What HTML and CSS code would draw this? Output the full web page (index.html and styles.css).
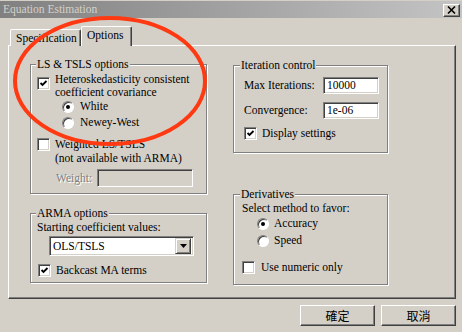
FILE: index.html
```html
<!DOCTYPE html>
<html lang="en">
<head>
  <meta charset="UTF-8" />
  <title>Equation Estimation</title>
  <link rel="stylesheet" href="styles.css">
</head>
<body>
  <div class="dialog">
    <div class="titlebar">
      <span class="title">Equation Estimation</span>
      <span class="close-btn">
        <svg width="9" height="8" viewBox="0 0 9 8"><path d="M1 0.5 L8 7.5 M8 0.5 L1 7.5" stroke="#000" stroke-width="1.6"/></svg>
      </span>
    </div>

    <div class="tabs">
      <div class="tab">Specification</div>
      <div class="tab active">Options</div>
    </div>

    <div class="panel">
      <div class="col col-left">
        <div class="group ls-group">
          <span class="legend">LS &amp; TSLS options</span>
          <div class="check-row hetero-row">
            <span class="checkbox checked"></span>
            <span class="label">Heteroskedasticity consistent<br>coefficient covariance</span>
          </div>
          <div class="radio-row white-row">
            <span class="radio on"></span>
            <span>White</span>
          </div>
          <div class="radio-row newey-row">
            <span class="radio"></span>
            <span>Newey-West</span>
          </div>
          <div class="check-row weighted-row">
            <span class="checkbox"></span>
            <span class="label">Weighted LS/TSLS<br>(not available with ARMA)</span>
          </div>
          <div class="weight-row">
            <span class="disabled weight-label">Weight:</span>
            <span class="weight-input"></span>
          </div>
        </div>

        <div class="group arma-group">
          <span class="legend">ARMA options</span>
          <div class="plain-row start-row">Starting coefficient values:</div>
          <div class="combo">
            <span class="combo-text">OLS/TSLS</span>
            <span class="combo-btn">
              <svg width="7" height="4" viewBox="0 0 7 4"><path d="M0 0 H7 L3.5 4 Z" fill="#000"/></svg>
            </span>
          </div>
          <div class="check-row backcast-row">
            <span class="checkbox checked"></span>
            <span class="label">Backcast MA terms</span>
          </div>
        </div>
      </div>

      <div class="col col-right">
        <div class="group iter-group">
          <span class="legend">Iteration control</span>
          <div class="field-row max-row">
            <span class="field-label">Max Iterations:</span>
            <span class="input field">10000</span>
          </div>
          <div class="field-row conv-row">
            <span class="field-label">Convergence:</span>
            <span class="input field">1e-06</span>
          </div>
          <div class="check-row display-row">
            <span class="checkbox checked"></span>
            <span class="label">Display settings</span>
          </div>
        </div>

        <div class="group deriv-group">
          <span class="legend">Derivatives</span>
          <div class="plain-row select-row">Select method to favor:</div>
          <div class="radio-row accuracy-row">
            <span class="radio on"></span>
            <span>Accuracy</span>
          </div>
          <div class="radio-row speed-row">
            <span class="radio"></span>
            <span>Speed</span>
          </div>
          <div class="check-row numeric-row">
            <span class="checkbox"></span>
            <span class="label">Use numeric only</span>
          </div>
        </div>
      </div>
    </div>

    <div class="buttons">
      <button class="btn">確定</button>
      <button class="btn">取消</button>
    </div>

    <!-- hand drawn highlight -->
    <svg class="highlight" width="462" height="332" viewBox="0 0 462 332">
      <ellipse cx="110" cy="81" rx="95" ry="63" fill="none" stroke="#ff3a12" stroke-width="4"/>
    </svg>
  </div>
</body>
</html>
```

FILE: styles.css
```css
* {
  box-sizing: border-box;
}
html, body {
  margin: 0;
  padding: 0;
}
body {
  background: #d4d0c8;
  font-family: "Liberation Serif", "Times New Roman", serif;
  font-size: 11.5px;
  line-height: 13px;
  color: #000;
}

.dialog {
  position: relative;
  width: 462px;
  height: 332px;
  overflow: hidden;
}

/* title bar */
.titlebar {
  margin-top: 1px;
  height: 17px;
  background: linear-gradient(to right, #808080, #c4c4c4);
  display: flex;
  align-items: center;
  justify-content: space-between;
  padding: 0 2px 0 3px;
}
.titlebar .title {
  color: #d4d0c8;
}
.close-btn {
  width: 17px;
  height: 13px;
  margin-top: 1px;
  background: #d4d0c8;
  border: 1px solid;
  border-color: #fff #404040 #404040 #fff;
  box-shadow: inset -1px -1px 0 #808080;
  display: flex;
  align-items: center;
  justify-content: center;
}

/* tabs */
.tabs {
  display: flex;
  align-items: flex-end;
  height: 20px;
  margin: 8px 0 -1px 10px;
}
.tab {
  height: 17px;
  width: 71px;
  padding: 1px 0 0 5px;
  line-height: 14px;
  border: 1px solid;
  border-bottom: none;
  border-color: #fff #404040 #404040 #fff;
  border-radius: 2px 2px 0 0;
  box-shadow: inset -1px 0 0 #808080;
  background: #d4d0c8;
}
.tab.active {
  position: relative;
  z-index: 1;
  height: 20px;
  width: 51px;
}

/* panel */
.panel {
  margin: 0 6px 0 8px;
  height: 254px;
  border: 1px solid;
  border-color: #fff #404040 #404040 #fff;
  box-shadow: inset -1px -1px 0 #808080;
  padding: 18px 0 0 21px;
  display: grid;
  grid-template-columns: 177px 155px;
  column-gap: 26px;
  align-content: start;
}
.col {
  display: flex;
  flex-direction: column;
  min-width: 0;
}
.col-left {
  gap: 19px;
}
.col-right {
  margin-top: 1px;
  gap: 41px;
}

/* etched group boxes */
.group {
  border: 1px solid #808080;
  box-shadow: inset 1px 1px 0 #fff, 1px 1px 0 #fff;
  display: flex;
  flex-direction: column;
}
.legend {
  align-self: flex-start;
  margin: -7px 0 0 5px;
  padding: 0 1px;
  background: #d4d0c8;
}
.ls-group { height: 130px; }
.arma-group { height: 70px; }
.iter-group { height: 88px; }
.deriv-group { height: 91px; }
.col-right .legend { margin-left: 6px; }

/* rows */
.check-row {
  display: flex;
  align-items: center;
  gap: 5px;
}
.radio-row {
  display: flex;
  align-items: center;
  gap: 6px;
  height: 13px;
}
.hetero-row {
  align-items: flex-start;
  margin-top: 2px;
  padding-left: 6px;
}
.hetero-row .checkbox { margin-top: 4px; }
.white-row { margin-top: 1px; padding-left: 31px; }
.newey-row { margin-top: 3px; padding-left: 31px; }
.weighted-row {
  align-items: flex-start;
  margin-top: 8px;
  padding-left: 6px;
  line-height: 14px;
}
.weighted-row .checkbox { margin-top: 1px; }

.weight-row {
  align-self: flex-start;
  display: flex;
  align-items: center;
  width: 162px;
  height: 18px;
  margin-top: 4px;
  padding-left: 25px;
  overflow: hidden;
}
.weight-label {
  flex: none;
  width: 41px;
}
.weight-input {
  flex: none;
  width: 96px;
  height: 18px;
  background: #d4d0c8;
  border: 1px solid;
  border-color: #808080 #fff #fff #808080;
  box-shadow: inset 1px 1px 0 #404040, inset -1px -1px 0 #d4d0c8;
}

.plain-row { margin-top: 1px; }
.start-row { padding-left: 6px; }
.combo {
  display: flex;
  align-items: center;
  justify-content: space-between;
  width: 145px;
  height: 20px;
  margin: 2px 0 0 18px;
  background: #fff;
  border: 1px solid;
  border-color: #808080 #fff #fff #808080;
  box-shadow: inset 1px 1px 0 #404040, inset -1px -1px 0 #d4d0c8;
  padding: 2px 2px 2px 3px;
}
.combo-btn {
  width: 16px;
  height: 16px;
  background: #d4d0c8;
  border: 1px solid;
  border-color: #d4d0c8 #404040 #404040 #d4d0c8;
  box-shadow: inset 1px 1px 0 #fff, inset -1px -1px 0 #808080;
  display: flex;
  align-items: center;
  justify-content: center;
}
.backcast-row { margin-top: 8px; padding-left: 7px; }

.field-row {
  display: flex;
  align-items: center;
  padding-left: 10px;
}
.max-row { margin-top: 5px; }
.conv-row { margin-top: 8px; }
.field-label { width: 79px; flex: none; }

/* sunken edit boxes */
.input {
  display: flex;
  align-items: center;
  flex: none;
  padding-left: 3px;
  background: #fff;
  border: 1px solid;
  border-color: #808080 #fff #fff #808080;
  box-shadow: inset 1px 1px 0 #404040, inset -1px -1px 0 #d4d0c8;
}
.field {
  width: 56px;
  height: 17px;
}
.display-row { margin-top: 8px; padding-left: 10px; }

.select-row { padding-left: 8px; }
.accuracy-row { margin-top: 2px; padding-left: 23px; gap: 5px; }
.speed-row { margin-top: 4px; padding-left: 23px; gap: 5px; }
.numeric-row { margin-top: 14px; padding-left: 8px; gap: 6px; }

.disabled {
  color: #808080;
  text-shadow: 1px 1px 0 #fff;
}

/* controls */
.checkbox {
  flex: none;
  width: 13px;
  height: 13px;
  background: #fff;
  border: 1px solid;
  border-color: #808080 #fff #fff #808080;
  box-shadow: inset 1px 1px 0 #404040, inset -1px -1px 0 #d4d0c8;
}
.checkbox.checked {
  background: #fff url("data:image/svg+xml,%3Csvg xmlns='http://www.w3.org/2000/svg' width='11' height='11'%3E%3Cpath d='M2.5 5 L4.5 7 L8.5 3' fill='none' stroke='%23000' stroke-width='1.8'/%3E%3C/svg%3E") no-repeat center;
}
.radio {
  flex: none;
  width: 12px;
  height: 12px;
  border-radius: 50%;
  background: #fff;
  border: 1px solid;
  border-color: #808080 #fff #fff #808080;
  box-shadow: inset 1px 1px 0 #404040;
  display: flex;
  align-items: center;
  justify-content: center;
}
.radio.on::after {
  content: "";
  width: 4px;
  height: 4px;
  border-radius: 50%;
  background: #000;
}

/* buttons */
.buttons {
  display: flex;
  justify-content: flex-end;
  gap: 6px;
  margin-top: 6px;
  padding-right: 6px;
}
.btn {
  width: 75px;
  height: 21px;
  padding: 0;
  background: #d4d0c8;
  border: 1px solid;
  border-color: #fff #404040 #404040 #fff;
  box-shadow: inset -1px -1px 0 #808080;
  font-family: "Noto Sans CJK TC", sans-serif;
  font-size: 12px;
  line-height: 14px;
  color: #000;
}

.highlight {
  position: absolute;
  top: 0;
  left: 0;
  pointer-events: none;
}
```
